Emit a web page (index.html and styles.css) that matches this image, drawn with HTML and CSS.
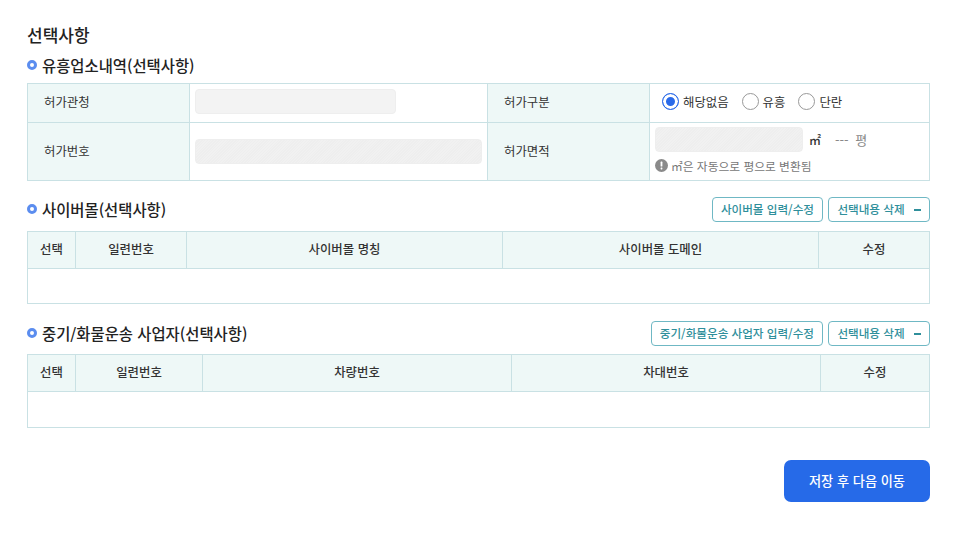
FILE: index.html
```html
<!DOCTYPE html>
<html lang="ko">
<head>
<meta charset="utf-8">
<title>선택사항</title>
<link rel="stylesheet" href="styles.css">
</head>
<body>
<main class="page">
  <h2 class="title">선택사항</h2>

  <div class="sec-head first"><h3 class="sec-title">유흥업소내역(선택사항)</h3></div>
  <div class="form-grid">
    <div class="th top">허가관청</div>
    <div class="td top"><span class="input short"></span></div>
    <div class="th top">허가구분</div>
    <div class="td top radios">
      <label class="radio on"><i></i>해당없음</label>
      <label class="radio"><i></i>유흥</label>
      <label class="radio"><i></i>단란</label>
    </div>
    <div class="th tall">허가번호</div>
    <div class="td"><span class="input full hatch"></span></div>
    <div class="th tall">허가면적</div>
    <div class="td area">
      <div class="area-row">
        <span class="input area-input hatch"></span>
        <span class="unit">㎡</span>
        <span class="pyeong">--- 평</span>
      </div>
      <div class="note">
        <svg class="note-icon" width="13" height="13" viewBox="0 0 13 13"><circle cx="6.5" cy="6.5" r="6.5" fill="#8a8a8a"/><rect x="5.6" y="2.6" width="1.8" height="5" rx=".6" fill="#fff"/><rect x="5.6" y="8.6" width="1.8" height="1.8" rx=".6" fill="#fff"/></svg>
        ㎡은 자동으로 평으로 변환됨
      </div>
    </div>
  </div>

  <div class="sec-head">
    <h3 class="sec-title">사이버몰(선택사항)</h3>
    <div class="actions">
      <button class="btn">사이버몰 입력/수정</button>
      <button class="btn del">선택내용 삭제<span class="minus"></span></button>
    </div>
  </div>
  <div class="list cyber">
    <div class="lh">선택</div><div class="lh">일련번호</div><div class="lh">사이버몰 명칭</div><div class="lh">사이버몰 도메인</div><div class="lh">수정</div>
    <div class="empty"></div>
  </div>

  <div class="sec-head third">
    <h3 class="sec-title">중기/화물운송 사업자(선택사항)</h3>
    <div class="actions">
      <button class="btn">중기/화물운송 사업자 입력/수정</button>
      <button class="btn del">선택내용 삭제<span class="minus"></span></button>
    </div>
  </div>
  <div class="list cargo">
    <div class="lh">선택</div><div class="lh">일련번호</div><div class="lh">차량번호</div><div class="lh">차대번호</div><div class="lh">수정</div>
    <div class="empty"></div>
  </div>

  <div class="footer"><button class="save">저장 후 다음 이동</button></div>
</main>
</body>
</html>
```

FILE: styles.css
```css
*, *::before, *::after { box-sizing: border-box; }
html, body { margin: 0; background: #fff; }
body {
  font-family: "Noto Sans CJK KR", "Noto Sans", sans-serif;
  color: #222;
  font-size: 12.4px;
}
.page { width: 966px; height: 536px; padding: 24px 36px 0 27px; overflow: hidden; }
.title { margin: 0; font-size: 17px; line-height: 22px; font-weight: 500; color: #222; }
.sec-head { display: flex; align-items: center; justify-content: space-between; height: 25px; margin-top: 16px; margin-bottom: 9px; }
.sec-head.first { height: 24px; margin-top: 7px; margin-bottom: 6px; }
.sec-head.third { margin-top: 17px; margin-bottom: 8px; }
.sec-title { margin: 0; padding-bottom: 2px; display: flex; align-items: center; font-size: 15.4px; line-height: 22px; font-weight: 500; color: #222; }
.first .sec-title { padding-bottom: 0; }
.sec-title::before { content: ""; width: 10px; height: 10px; border: 3px solid #5b8def; border-radius: 50%; margin-right: 5px; }

.form-grid {
  display: grid;
  grid-template-columns: 162px 298px 162px 279px;
  grid-template-rows: 39px 57px;
  border: 1px solid #c9e1e4;
}
.th, .td { display: flex; align-items: center; border-right: 1px solid #c9e1e4; border-bottom: 1px solid #c9e1e4; }
.th { background: #eef8f7; padding-left: 16px; color: #333; }
.td { padding-left: 5px; }
.top { padding-bottom: 3px; }
.tall { padding-bottom: 2px; }
.form-grid > :nth-child(4n) { border-right: 0; }
.form-grid > :nth-last-child(-n+4) { border-bottom: 0; }
.input { display: block; height: 25px; background: #f3f3f3; border: 1px solid #eeeeee; border-radius: 4px; }
.short { width: 201px; }
.full { width: 287px; margin-top: -1px; }
.hatch { background: repeating-linear-gradient(135deg, #eeeeee 0 1px, #f1f1f1 1px 2px); }
.radios { padding-left: 12px; gap: 13px; }
.radio { display: flex; align-items: center; gap: 4px; color: #333; }
.radio i { width: 17px; height: 17px; border: 1px solid #999; border-radius: 50%; background: #fff; }
.radio.on i { border-color: #2a6ae9; box-shadow: inset 0 0 0 3px #fff; background: #2a6ae9; }
.area { flex-direction: column; align-items: flex-start; justify-content: flex-start; padding-top: 4px; }
.area-row { display: flex; align-items: center; height: 25px; }
.area-input { width: 148px; }
.unit { margin-left: 6px; font-weight: 500; color: #333; font-size: 12px; }
.pyeong { margin-left: 14px; color: #888; font-size: 13px; word-spacing: 3px; }
.note { display: flex; align-items: center; gap: 3px; margin-top: 4px; height: 18px; color: #777; font-size: 11.75px; }

.actions { display: flex; gap: 5px; }
.btn {
  display: flex; align-items: center; justify-content: center;
  height: 25px; padding: 0 8px;
  font: 500 11.6px/1 "Noto Sans CJK KR", sans-serif;
  color: #2f8f9b; background: #fff;
  border: 1px solid #6fb8c4; border-radius: 4px;
}
.del { width: 102px; }
.minus { width: 7px; height: 2px; background: #2f8f9b; margin-left: 9px; }

.list { display: grid; border: 1px solid #c9e1e4; }
.cyber { grid-template-columns: 48px 111px 316px 316px 110px; grid-template-rows: 37px 34px; }
.cargo { grid-template-columns: 48px 127px 309px 309px 108px; grid-template-rows: 37px 35px; }
.lh {
  display: flex; align-items: center; justify-content: center;
  padding-bottom: 2px;
  background: #eef8f7; font-weight: 500; color: #333;
  border-right: 1px solid #c9e1e4; border-bottom: 1px solid #c9e1e4;
}
.lh:nth-child(5) { border-right: 0; }
.empty { grid-column: 1 / -1; }

.footer { display: flex; justify-content: flex-end; margin-top: 32px; }
.save {
  width: 146px; height: 42px;
  font: 500 13.2px/1 "Noto Sans CJK KR", sans-serif;
  color: #fff; background: #266ae8; border: 0; border-radius: 7px;
}
```
